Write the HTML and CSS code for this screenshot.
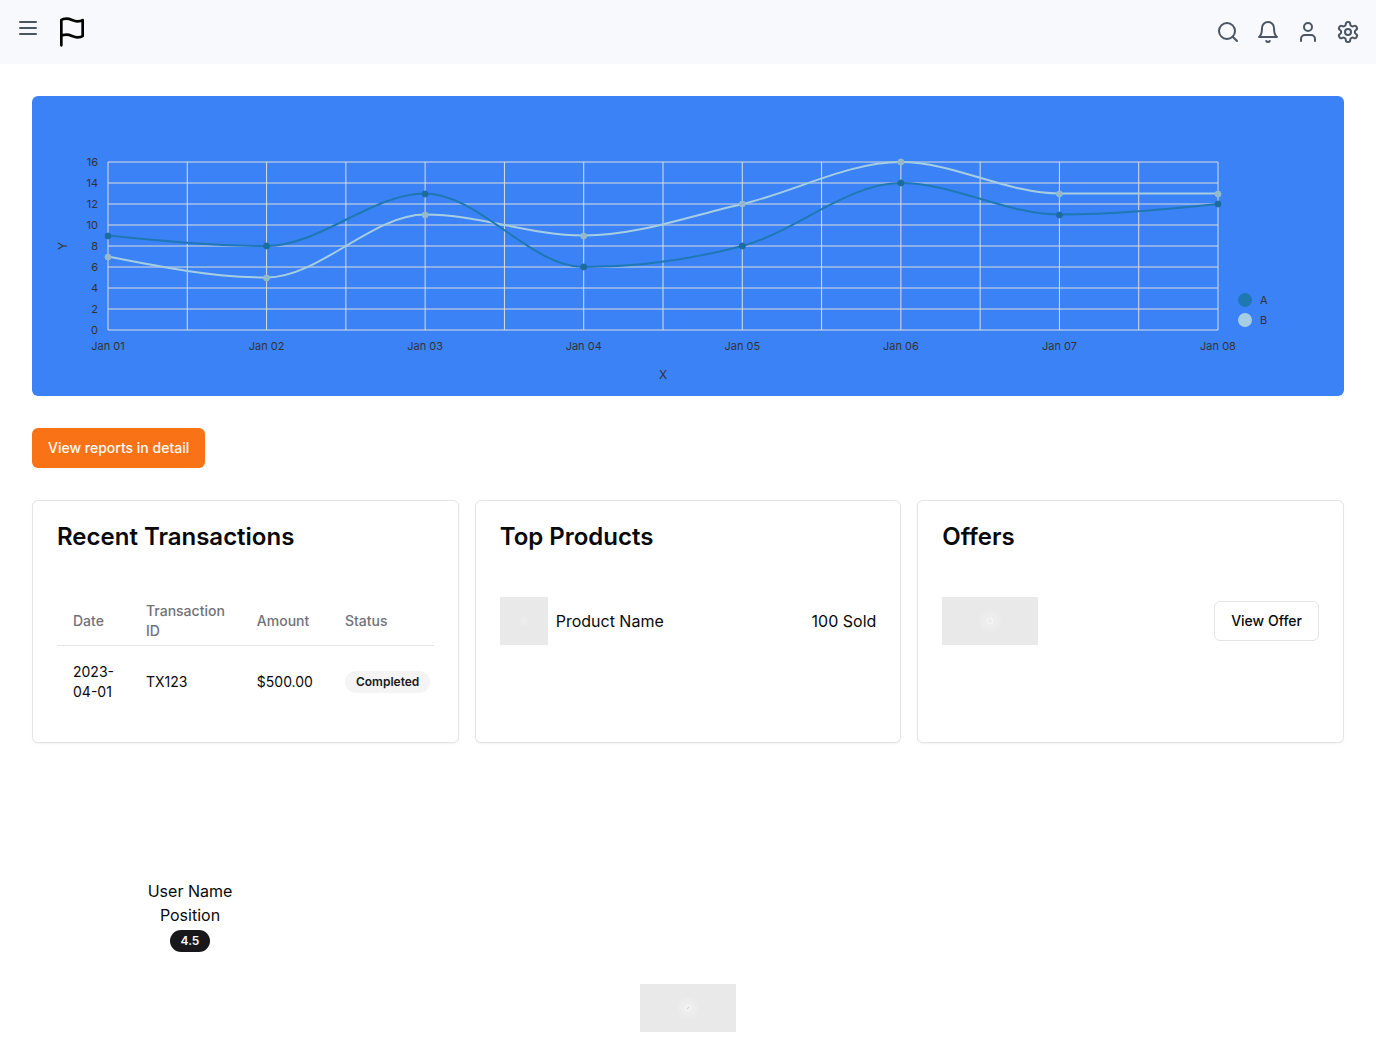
FILE: index.html
```html
<!DOCTYPE html>
<html lang="en">
<head>
<meta charset="utf-8">
<meta name="viewport" content="width=device-width, initial-scale=1">
<title>Dashboard</title>
<link rel="stylesheet" href="styles.css">
</head>
<body>
<header class="topbar">
  <div class="topbar-left">
    <button class="icon-button" type="button" aria-label="Menu">
      <svg class="icon" viewBox="0 0 24 24"><path d="M4 6h16M4 12h16M4 18h16"/></svg>
    </button>
    <a class="brand" href="#" aria-label="Home">
      <svg class="icon icon-logo" viewBox="0 0 24 24"><path d="M4 15s1-1 4-1 5 2 8 2 4-1 4-1V3s-1 1-4 1-5-2-8-2-4 1-4 1zM4 22v-7"/></svg>
    </a>
  </div>
  <nav class="topbar-right" aria-label="Account">
    <button class="icon-button" type="button" aria-label="Search">
      <svg class="icon" viewBox="0 0 24 24"><circle cx="11" cy="11" r="8"/><path d="m21 21-4.3-4.3"/></svg>
    </button>
    <button class="icon-button" type="button" aria-label="Notifications">
      <svg class="icon" viewBox="0 0 24 24"><path d="M6 8a6 6 0 0 1 12 0c0 7 3 9 3 9H3s3-2 3-9M10.3 21a1.94 1.94 0 0 0 3.4 0"/></svg>
    </button>
    <button class="icon-button" type="button" aria-label="Profile">
      <svg class="icon" viewBox="0 0 24 24"><path d="M19 21v-2a4 4 0 0 0-4-4H9a4 4 0 0 0-4 4v2"/><circle cx="12" cy="7" r="4"/></svg>
    </button>
    <button class="icon-button" type="button" aria-label="Settings">
      <svg class="icon" viewBox="0 0 24 24"><path d="M12.22 2h-.44a2 2 0 0 0-2 2v.18a2 2 0 0 1-1 1.73l-.43.25a2 2 0 0 1-2 0l-.15-.08a2 2 0 0 0-2.73.73l-.22.38a2 2 0 0 0 .73 2.73l.15.1a2 2 0 0 1 1 1.72v.51a2 2 0 0 1-1 1.74l-.15.09a2 2 0 0 0-.73 2.73l.22.38a2 2 0 0 0 2.73.73l.15-.08a2 2 0 0 1 2 0l.43.25a2 2 0 0 1 1 1.73V20a2 2 0 0 0 2 2h.44a2 2 0 0 0 2-2v-.18a2 2 0 0 1 1-1.73l.43-.25a2 2 0 0 1 2 0l.15.08a2 2 0 0 0 2.73-.73l.22-.39a2 2 0 0 0-.73-2.73l-.15-.08a2 2 0 0 1-1-1.74v-.5a2 2 0 0 1 1-1.74l.15-.09a2 2 0 0 0 .73-2.73l-.22-.38a2 2 0 0 0-2.73-.73l-.15.08a2 2 0 0 1-2 0l-.43-.25a2 2 0 0 1-1-1.73V4a2 2 0 0 0-2-2z"/><circle cx="12" cy="12" r="3"/></svg>
    </button>
  </nav>
</header>

<main class="page">
  <section class="chart-panel" aria-label="Report chart">
    <svg class="chart" viewBox="0 0 1280 284" role="img" aria-label="Series A and B, January 1 to 8">
      <path class="grid-line" d="M60 50V218M139.29 50V218M218.57 50V218M297.86 50V218M377.14 50V218M456.43 50V218M535.71 50V218M615 50V218M694.29 50V218M773.57 50V218M852.86 50V218M932.14 50V218M1011.43 50V218M1090.71 50V218M1170 50V218"/>
      <path class="grid-line" d="M60 50H1170M60 71H1170M60 92H1170M60 113H1170M60 134H1170M60 155H1170M60 176H1170M60 197H1170M60 218H1170"/>
      <g class="label label-end">
        <text x="50" y="54">16</text><text x="50" y="75">14</text><text x="50" y="96">12</text>
        <text x="50" y="117">10</text><text x="50" y="138">8</text><text x="50" y="159">6</text>
        <text x="50" y="180">4</text><text x="50" y="201">2</text><text x="50" y="222">0</text>
      </g>
      <g class="label label-middle">
        <text x="60" y="238">Jan 01</text><text x="218.57" y="238">Jan 02</text>
        <text x="377.14" y="238">Jan 03</text><text x="535.71" y="238">Jan 04</text>
        <text x="694.29" y="238">Jan 05</text><text x="852.86" y="238">Jan 06</text>
        <text x="1011.43" y="238">Jan 07</text><text x="1170" y="238">Jan 08</text>
      </g>
      <g class="label label-title">
        <text x="615" y="267">X</text>
        <text transform="translate(19 134) rotate(-90)">Y</text>
      </g>
      <path class="line line-b" d="M60 144.5C112.86 155 165.71 165.5 218.57 165.5C271.43 165.5 324.29 102.5 377.14 102.5C430 102.5 482.86 123.5 535.71 123.5C588.57 123.5 641.43 104.25 694.29 92C747.14 79.75 800 50 852.86 50C905.71 50 958.57 81.5 1011.43 81.5H1170"/>
      <path class="line line-a" d="M60 123.5C112.86 128.75 165.71 134 218.57 134C271.43 134 324.29 81.5 377.14 81.5C430 81.5 482.86 155 535.71 155C588.57 155 641.43 148 694.29 134C747.14 120 800 71 852.86 71C905.71 71 958.57 102.5 1011.43 102.5C1064.29 102.5 1117.14 97.25 1170 92"/>
      <g class="point-b">
        <circle cx="60" cy="145" r="3"/><circle cx="218.57" cy="166" r="3"/><circle cx="377.14" cy="103" r="3"/><circle cx="535.71" cy="124" r="3"/><circle cx="694.29" cy="92" r="3"/><circle cx="852.86" cy="50" r="3"/><circle cx="1011.43" cy="82" r="3"/><circle cx="1170" cy="82" r="3"/>
      </g>
      <g class="point-a">
        <circle cx="60" cy="124" r="3"/><circle cx="218.57" cy="134" r="3"/><circle cx="377.14" cy="82" r="3"/><circle cx="535.71" cy="155" r="3"/><circle cx="694.29" cy="134" r="3"/><circle cx="852.86" cy="71" r="3"/><circle cx="1011.43" cy="103" r="3"/><circle cx="1170" cy="92" r="3"/>
      </g>
      <circle class="swatch-a" cx="1197" cy="188" r="7"/>
      <circle class="swatch-b" cx="1197" cy="208" r="7"/>
      <g class="label">
        <text x="1212" y="192">A</text><text x="1212" y="212">B</text>
      </g>
    </svg>
  </section>

  <button class="button button-primary" type="button">View reports in detail</button>

  <div class="cards">
    <section class="card">
      <h2 class="card-title">Recent Transactions</h2>
      <div class="table-wrap">
        <table class="table">
          <thead>
            <tr><th scope="col">Date</th><th scope="col">Transaction ID</th><th scope="col">Amount</th><th scope="col">Status</th></tr>
          </thead>
          <tbody>
            <tr><td>2023-04-01</td><td>TX123</td><td>$500.00</td><td><span class="badge badge-muted">Completed</span></td></tr>
          </tbody>
        </table>
      </div>
    </section>

    <section class="card">
      <h2 class="card-title">Top Products</h2>
      <div class="row">
        <div class="product">
          <svg class="thumb thumb-square" viewBox="0 0 48 48" role="img" aria-label="Product">
            <circle class="halo" cx="24" cy="24" r="5"/><circle class="halo" cx="24" cy="24" r="3"/>
          </svg>
          <span>Product Name</span>
        </div>
        <span>100 Sold</span>
      </div>
    </section>

    <section class="card">
      <h2 class="card-title">Offers</h2>
      <div class="row">
        <svg class="thumb" viewBox="0 0 96 48" role="img" aria-label="Offer">
          <circle class="halo" cx="48" cy="24" r="11"/><circle class="halo" cx="48" cy="24" r="8"/><circle class="ring" cx="48" cy="24" r="3"/>
        </svg>
        <button class="button button-outline" type="button">View Offer</button>
      </div>
    </section>
  </div>

  <section class="people" aria-label="Team">
    <article class="person">
      <div class="avatar"></div>
      <div>User Name</div>
      <div>Position</div>
      <div><span class="badge badge-dark">4.5</span></div>
    </article>
  </section>

  <footer class="footer">
    <svg class="thumb" viewBox="0 0 96 48" role="img" aria-label="Footer">
      <circle class="halo" cx="48" cy="24" r="11"/><circle class="halo" cx="48" cy="24" r="8"/><circle class="ring" cx="48" cy="24" r="3"/><path class="speck" d="m47 25 2-2"/>
    </svg>
  </footer>
</main>
</body>
</html>
```
FILE: styles.css
```css
*,
*::before,
*::after {
  box-sizing: border-box;
}

body {
  margin: 0;
  background: #fff;
  color: #09090b;
  font: 16px/24px Inter, "Liberation Sans", sans-serif;
}

button {
  font: inherit;
  cursor: pointer;
}

.topbar {
  display: flex;
  justify-content: space-between;
  align-items: center;
  padding: 16px;
  background: #f7f9fc;
}

.topbar-left {
  display: flex;
  align-items: flex-start;
  gap: 16px;
}

.topbar-right {
  display: flex;
  gap: 16px;
}

.icon-button {
  display: block;
  padding: 0;
  border: 0;
  background: none;
  color: #4b5563;
}

.brand {
  color: #000;
}

.icon {
  display: block;
  width: 24px;
  height: 24px;
  fill: none;
  stroke: currentColor;
  stroke-width: 2;
  stroke-linecap: round;
  stroke-linejoin: round;
}

.icon-logo {
  width: 32px;
  height: 32px;
}

.page {
  display: flex;
  flex-direction: column;
  align-items: stretch;
  gap: 32px;
  padding: 32px;
}

.chart-panel {
  padding: 16px 16px 0;
  border-radius: 6px;
  background: #3b82f6;
}

.chart {
  display: block;
  width: 100%;
  height: auto;
}

.grid-line {
  fill: none;
  stroke: #ddd;
}

.label {
  fill: #333;
  font-size: 11px;
}

.label-end {
  text-anchor: end;
}

.label-middle,
.label-title {
  text-anchor: middle;
}

.label-title {
  font-size: 12px;
}

.line {
  fill: none;
  stroke-width: 2;
}

.line-a {
  stroke: #1f78b4;
}

.line-b {
  stroke: #a6cee3;
}

.swatch-a {
  fill: #1f78b4;
}

.swatch-b {
  fill: #a6cee3;
}

.point-a {
  fill: #1c6ca2;
  stroke: #1c6ca2;
}

.point-b {
  fill: #95b9cc;
  stroke: #95b9cc;
}

.button {
  height: 40px;
  padding: 0 16px;
  border: 0;
  border-radius: 6px;
  font-size: 14px;
  line-height: 20px;
  font-weight: 500;
}

.button-primary {
  align-self: flex-start;
  background: #f97316;
  color: #fafafa;
}

.button-outline {
  border: 1px solid #e4e4e7;
  background: #fff;
  color: #09090b;
}

.cards {
  display: grid;
  grid-template-columns: repeat(3, minmax(0, 1fr));
  gap: 16px;
}

.card {
  display: flex;
  flex-direction: column;
  gap: 48px;
  padding: 24px;
  border: 1px solid #e4e4e7;
  border-radius: 6px;
  background: #fff;
  box-shadow: 0 1px 2px rgba(0, 0, 0, 0.05);
}

.card-title {
  margin: 0;
  font-size: 24px;
  line-height: 24px;
  font-weight: 600;
}

.table-wrap {
  overflow-x: auto;
  scrollbar-width: none;
}

.table {
  width: 100%;
  border-collapse: collapse;
  font-size: 14px;
  line-height: 20px;
}

.table th {
  height: 48px;
  padding: 0 16px;
  color: #71717a;
  font-weight: 500;
  text-align: left;
}

.table thead tr {
  border-bottom: 1px solid #e4e4e7;
}

.table td {
  padding: 16px;
}

.badge {
  display: inline-flex;
  padding: 3px 11px;
  border-radius: 11px;
  font-size: 12px;
  line-height: 16px;
  font-weight: 600;
}

.badge-muted {
  background: #f4f4f5;
  color: #18181b;
}

.badge-dark {
  background: #18181b;
  color: #fafafa;
}

.row {
  display: flex;
  justify-content: space-between;
  align-items: center;
}

.product {
  display: flex;
  align-items: center;
  gap: 8px;
}

.thumb {
  display: block;
  width: 96px;
  height: 48px;
  background: #e9e9e9;
}

.thumb-square {
  width: 48px;
}

.halo {
  fill: #fff;
  fill-opacity: 0.12;
}

.ring {
  fill: none;
  stroke: #f8f8f8;
}

.speck {
  stroke: #d4d4d4;
}

.people {
  display: grid;
  grid-template-columns: repeat(4, minmax(0, 1fr));
  gap: 16px;
}

.person {
  text-align: center;
}

.avatar {
  width: 96px;
  height: 96px;
  margin: 0 auto 8px;
}

.footer {
  display: flex;
  justify-content: center;
}
```
